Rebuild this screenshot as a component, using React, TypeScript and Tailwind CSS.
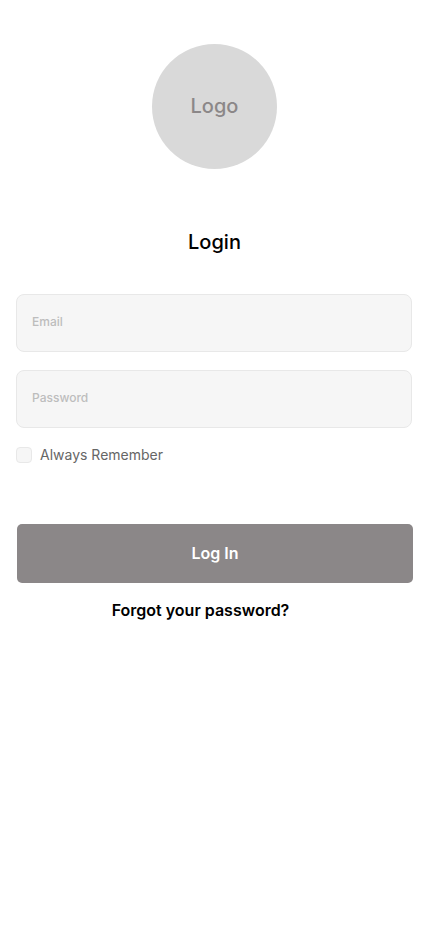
export default function App() {
  return (
    <main className="min-h-screen bg-white pl-4 pr-[17px] pt-11 font-['Inter',sans-serif] text-black antialiased">
      <div className="mx-auto flex size-[125px] items-center justify-center rounded-full bg-[#d9d9d9] pb-0.5 text-xl font-medium text-[#8b8788]">
        Logo
      </div>
      <h1 className="mt-[59px] text-center text-xl font-medium">Login</h1>
      <form className="mt-[38px]" onSubmit={(e) => e.preventDefault()}>
        <div className="flex flex-col gap-[18px] pr-px">
          <input
            type="email"
            aria-label="Email"
            placeholder="Email"
            className="h-[58px] w-full rounded-lg border border-[#e8e8e8] bg-[#f6f6f6] px-[15px] pb-1 text-xs font-medium outline-none placeholder:text-[#bdbdbd]"
          />
          <input
            type="password"
            aria-label="Password"
            placeholder="Password"
            className="h-[58px] w-full rounded-lg border border-[#e8e8e8] bg-[#f6f6f6] px-[15px] pb-1 text-xs font-medium outline-none placeholder:text-[#bdbdbd]"
          />
        </div>
        <label className="mt-[17px] flex h-5 items-center gap-2 text-sm text-[#666666]">
          <input
            type="checkbox"
            className="size-4 appearance-none rounded border border-[#e8e8e8] bg-[#f6f6f6] checked:bg-[#8b8788]"
          />
          Always Remember
        </label>
        <div className="mt-[59px] pl-px">
          <button
            type="submit"
            className="h-[59px] w-full rounded-[5px] bg-[#8b8788] pb-0.5 text-base font-semibold text-white"
          >
            Log In
          </button>
        </div>
        <div className="mt-[15px] pr-7 text-center">
          <a href="#forgot" className="text-base font-semibold">
            Forgot your password?
          </a>
        </div>
      </form>
    </main>
  );
}
